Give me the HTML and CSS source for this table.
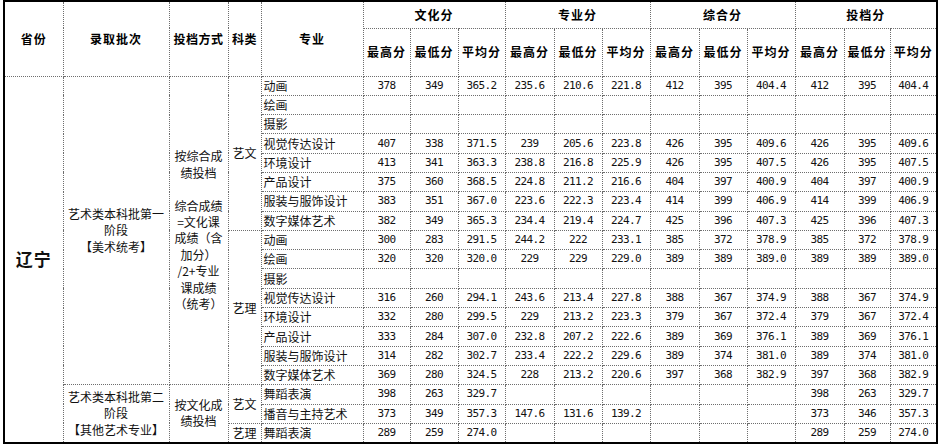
FILE: index.html
```html
<!DOCTYPE html>
<html lang="zh-CN">
<head>
<meta charset="utf-8">
<title>录取分数</title>
<link rel="stylesheet" href="styles.css">
</head>
<body>
<table class="scores">
<colgroup>
<col class="c-prov"><col class="c-batch"><col class="c-mode"><col class="c-type"><col class="c-major">
<col class="c47"><col class="c48"><col class="c47">
<col class="c49"><col class="c48"><col class="c48">
<col class="c49"><col class="c48"><col class="c48">
<col class="c49"><col class="c46"><col class="c47">
</colgroup>
<thead>
<tr class="h1">
<th rowspan="2">省份</th><th rowspan="2">录取批次</th><th rowspan="2" class="tight">投档方式</th><th rowspan="2" class="tight">科类</th><th rowspan="2">专业</th>
<th colspan="3">文化分</th><th colspan="3">专业分</th><th colspan="3">综合分</th><th colspan="3">投档分</th>
</tr>
<tr class="h2">
<th>最高分</th><th>最低分</th><th>平均分</th>
<th>最高分</th><th>最低分</th><th>平均分</th>
<th>最高分</th><th>最低分</th><th>平均分</th>
<th>最高分</th><th>最低分</th><th>平均分</th>
</tr>
</thead>
<tbody>
<tr>
<td rowspan="19" class="prov">辽宁</td>
<td rowspan="16" class="txt batch">艺术类本科批第一<br>阶段<br>【美术统考】</td>
<td rowspan="16" class="txt mode">按综合成<br>绩投档<br><br>综合成绩<br>=文化课<br>成绩（含<br>加分）<br>/2+专业<br>课成绩<br>（统考）</td>
<td rowspan="8" class="txt">艺文</td>
<td class="major">动画</td><td>378</td><td>349</td><td>365.2</td><td>235.6</td><td>210.6</td><td>221.8</td><td>412</td><td>395</td><td>404.4</td><td>412</td><td>395</td><td>404.4</td>
</tr>
<tr><td class="major">绘画</td><td></td><td></td><td></td><td></td><td></td><td></td><td></td><td></td><td></td><td></td><td></td><td></td></tr>
<tr><td class="major">摄影</td><td></td><td></td><td></td><td></td><td></td><td></td><td></td><td></td><td></td><td></td><td></td><td></td></tr>
<tr><td class="major">视觉传达设计</td><td>407</td><td>338</td><td>371.5</td><td>239</td><td>205.6</td><td>223.8</td><td>426</td><td>395</td><td>409.6</td><td>426</td><td>395</td><td>409.6</td></tr>
<tr><td class="major">环境设计</td><td>413</td><td>341</td><td>363.3</td><td>238.8</td><td>216.8</td><td>225.9</td><td>426</td><td>395</td><td>407.5</td><td>426</td><td>395</td><td>407.5</td></tr>
<tr><td class="major">产品设计</td><td>375</td><td>360</td><td>368.5</td><td>224.8</td><td>211.2</td><td>216.6</td><td>404</td><td>397</td><td>400.9</td><td>404</td><td>397</td><td>400.9</td></tr>
<tr><td class="major">服装与服饰设计</td><td>383</td><td>351</td><td>367.0</td><td>223.6</td><td>222.3</td><td>223.4</td><td>414</td><td>399</td><td>406.9</td><td>414</td><td>399</td><td>406.9</td></tr>
<tr><td class="major">数字媒体艺术</td><td>382</td><td>349</td><td>365.3</td><td>234.4</td><td>219.4</td><td>224.7</td><td>425</td><td>396</td><td>407.3</td><td>425</td><td>396</td><td>407.3</td></tr>
<tr>
<td rowspan="8" class="txt">艺理</td>
<td class="major">动画</td><td>300</td><td>283</td><td>291.5</td><td>244.2</td><td>222</td><td>233.1</td><td>385</td><td>372</td><td>378.9</td><td>385</td><td>372</td><td>378.9</td>
</tr>
<tr><td class="major">绘画</td><td>320</td><td>320</td><td>320.0</td><td>229</td><td>229</td><td>229.0</td><td>389</td><td>389</td><td>389.0</td><td>389</td><td>389</td><td>389.0</td></tr>
<tr><td class="major">摄影</td><td></td><td></td><td></td><td></td><td></td><td></td><td></td><td></td><td></td><td></td><td></td><td></td></tr>
<tr><td class="major">视觉传达设计</td><td>316</td><td>260</td><td>294.1</td><td>243.6</td><td>213.4</td><td>227.8</td><td>388</td><td>367</td><td>374.9</td><td>388</td><td>367</td><td>374.9</td></tr>
<tr><td class="major">环境设计</td><td>332</td><td>280</td><td>299.5</td><td>229</td><td>213.2</td><td>223.3</td><td>379</td><td>367</td><td>372.4</td><td>379</td><td>367</td><td>372.4</td></tr>
<tr><td class="major">产品设计</td><td>333</td><td>284</td><td>307.0</td><td>232.8</td><td>207.2</td><td>222.6</td><td>389</td><td>369</td><td>376.1</td><td>389</td><td>369</td><td>376.1</td></tr>
<tr><td class="major">服装与服饰设计</td><td>314</td><td>282</td><td>302.7</td><td>233.4</td><td>222.2</td><td>229.6</td><td>389</td><td>374</td><td>381.0</td><td>389</td><td>374</td><td>381.0</td></tr>
<tr><td class="major">数字媒体艺术</td><td>369</td><td>280</td><td>324.5</td><td>228</td><td>213.2</td><td>220.6</td><td>397</td><td>368</td><td>382.9</td><td>397</td><td>368</td><td>382.9</td></tr>
<tr>
<td rowspan="3" class="txt batch">艺术类本科批第二<br>阶段<br>【其他艺术专业】</td>
<td rowspan="3" class="txt mode">按文化成<br>绩投档</td>
<td rowspan="2" class="txt">艺文</td>
<td class="major">舞蹈表演</td><td>398</td><td>263</td><td>329.7</td><td></td><td></td><td></td><td></td><td></td><td></td><td>398</td><td>263</td><td>329.7</td>
</tr>
<tr><td class="major">播音与主持艺术</td><td>373</td><td>349</td><td>357.3</td><td>147.6</td><td>131.6</td><td>139.2</td><td></td><td></td><td></td><td>373</td><td>346</td><td>357.3</td></tr>
<tr>
<td class="txt">艺理</td>
<td class="major">舞蹈表演</td><td>289</td><td>259</td><td>274.0</td><td></td><td></td><td></td><td></td><td></td><td></td><td>289</td><td>259</td><td>274.0</td>
</tr>
</tbody>
</table>
</body>
</html>
```

FILE: styles.css
```css
html, body {
  margin: 0;
  padding: 0;
  background: #ffffff;
}

body {
  padding-left: 3px;
  font-family: "Noto Sans CJK SC", "DejaVu Sans", sans-serif;
  color: #000;
}

.scores {
  border-collapse: collapse;
  table-layout: fixed;
  width: 934px;
  border: 2px solid #000;
}

.c-prov { width: 59px; }
.c-batch { width: 106px; }
.c-mode { width: 59px; }
.c-type { width: 33px; }
.c-major { width: 102px; }
.c46 { width: 46px; }
.c47 { width: 47px; }
.c48 { width: 48px; }
.c49 { width: 49px; }

.scores th,
.scores td {
  border: 1px dotted #6e6e6e;
  padding: 0;
  text-align: center;
  vertical-align: middle;
  overflow: hidden;
  white-space: nowrap;
}

.scores th {
  font-size: 12px;
  font-weight: bold;
  letter-spacing: 1px;
  line-height: 14px;
}

.scores th.tight {
  letter-spacing: 0.5px;
}

.h1 { height: 27px; }
.h2 { height: 48px; }

.scores tbody tr { height: 19.3px; }

.scores td {
  font-family: "DejaVu Sans Mono", "Liberation Mono", monospace;
  font-size: 11px;
  letter-spacing: -0.6px;
  line-height: 16px;
  color: #111;
}

.scores td.txt,
.scores td.major {
  font-family: "Noto Sans CJK SC", sans-serif;
  font-size: 12px;
  letter-spacing: 0;
  line-height: 16px;
}

.scores td.batch {
  line-height: 16.5px;
}

.scores td.major {
  text-align: left;
  padding-left: 2px;
}

.scores td.mode {
  line-height: 16.4px;
}

.scores td.prov {
  font-family: "Noto Sans CJK SC", serif;
  font-size: 17px;
  font-weight: bold;
  letter-spacing: 1px;
}
```
